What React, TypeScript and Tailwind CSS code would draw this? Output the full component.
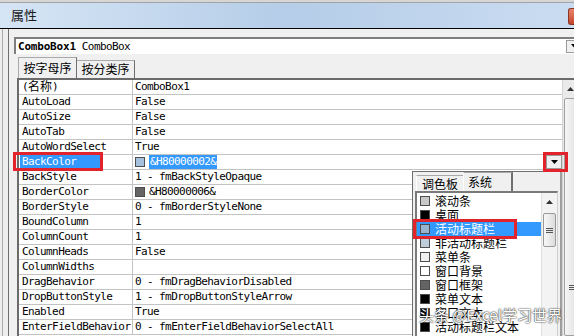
import React from 'react';

type Row = { name: string; value: string; swatch?: string; selected?: boolean };

const rows: Row[] = [
  { name: '(名称)', value: 'ComboBox1' },
  { name: 'AutoLoad', value: 'False' },
  { name: 'AutoSize', value: 'False' },
  { name: 'AutoTab', value: 'False' },
  { name: 'AutoWordSelect', value: 'True' },
  { name: 'BackColor', value: '&H80000002&', swatch: '#a6c1df', selected: true },
  { name: 'BackStyle', value: '1 - fmBackStyleOpaque' },
  { name: 'BorderColor', value: '&H80000006&', swatch: '#646464' },
  { name: 'BorderStyle', value: '0 - fmBorderStyleNone' },
  { name: 'BoundColumn', value: '1' },
  { name: 'ColumnCount', value: '1' },
  { name: 'ColumnHeads', value: 'False' },
  { name: 'ColumnWidths', value: '' },
  { name: 'DragBehavior', value: '0 - fmDragBehaviorDisabled' },
  { name: 'DropButtonStyle', value: '1 - fmDropButtonStyleArrow' },
  { name: 'Enabled', value: 'True' },
  { name: 'EnterFieldBehavior', value: '0 - fmEnterFieldBehaviorSelectAll' },
];

const systemColors = [
  { label: '滚动条', color: '#c8c8c8' },
  { label: '桌面', color: '#000000' },
  { label: '活动标题栏', color: '#99b4d1', selected: true },
  { label: '非活动标题栏', color: '#bfcddb' },
  { label: '菜单条', color: '#f0f0f0' },
  { label: '窗口背景', color: '#ffffff' },
  { label: '窗口框架', color: '#646464' },
  { label: '菜单文本', color: '#000000' },
  { label: '窗口文本', color: '#000000' },
  { label: '活动标题栏文本', color: '#000000' },
];

function DownArrow() {
  return (
    <svg width="7" height="4" viewBox="0 0 7 4">
      <path d="M0 0h7L3.5 4z" fill="#000" />
    </svg>
  );
}

function UpArrow() {
  return (
    <svg width="7" height="4" viewBox="0 0 7 4">
      <path d="M0 4h7L3.5 0z" fill="#333" />
    </svg>
  );
}

function Grip() {
  return (
    <div className="flex flex-col gap-px">
      <div className="w-[7px] h-px bg-[#555]" />
      <div className="w-[7px] h-px bg-[#555]" />
      <div className="w-[7px] h-px bg-[#555]" />
    </div>
  );
}

export default function App() {
  return (
    <div className="relative w-[574px] h-[336px] overflow-hidden bg-[#f0f0f0] text-black font-['DejaVu_Sans_Mono','Noto_Sans_CJK_SC',monospace]">
      {/* sheet behind the window */}
      <div className="h-[3px] bg-[#d6d6d6] border-b border-[#a3a3a3]" />

      {/* title bar */}
      <div className="flex h-[26px] border-b border-black bg-gradient-to-r from-[#d6e5f5] via-[#b5cde8] to-[#cadcf1]">
        <span className="pl-[11px] pt-[3px] text-[13px] leading-[18px] text-[#1a1a1a] font-['Noto_Sans_CJK_SC',sans-serif]">
          属性
        </span>
        <div className="ml-auto mt-[5px] w-[6px] h-[17px] rounded-l-[3px] border border-r-0 border-[#8b3525] bg-gradient-to-b from-[#e8866d] to-[#c4432a]" />
      </div>

      <div className="flex h-[307px]">
        <div className="flex-none w-[9px] border-r border-[#707070] bg-[#eeeeee]">
          <div className="ml-[2px] w-px h-full bg-[#aaaaaa]" />
        </div>

        <div className="flex-none w-[600px] flex flex-col pt-[8px] pl-[5px]">
          {/* object combo */}
          <div className="flex items-center w-[570px] h-[17px] bg-white border-t-2 border-l-2 border-[#7e7e7e]">
            <span className="pl-[2px] text-[11px] leading-[13px] whitespace-pre">
              <b className="tracking-[-0.2px]">ComboBox1</b>
              <span className="tracking-[-0.6px]"> ComboBox</span>
            </span>
            <div className="ml-auto mr-[2px] flex items-center justify-center w-[16px] h-[13px] bg-[#f0f0f0] border border-[#9a9a9a]">
              <DownArrow />
            </div>
          </div>

          {/* tabs */}
          <div className="flex items-end mt-[3px] h-[21px] pl-[4px] font-['Noto_Sans_CJK_SC',sans-serif] text-[12px] leading-[14px]">
            <div className="flex items-center justify-center w-[59px] h-[21px] border-t border-l border-[#a9a9a9] border-r border-r-[#6f6f6f] bg-[#f0f0f0]">
              按字母序
            </div>
            <div className="flex items-center justify-center w-[58px] h-[18px] border-t border-[#a9a9a9] border-r border-r-[#6f6f6f]">
              按分类序
            </div>
          </div>

          {/* property grid */}
          <div className="flex ml-[3px] w-[565px] h-[262px] border-t-2 border-l-2 border-[#6b6b6b] bg-white">
            <div className="flex-none w-[543px] text-[11px] leading-[14px] tracking-[-0.6px] whitespace-pre">
              {rows.map((r) => (
                <div key={r.name} className="flex h-[15px] border-b border-[#c3c3c3]">
                  <div className="flex-none w-[114px] h-full pl-px border-r border-[#c3c3c3]">
                    <div
                      className={`flex items-center h-full pl-[2px] ${r.selected ? 'w-[81px] bg-[#3399ff] text-white' : ''}`}
                    >
                      {r.name === '(名称)' ? (
                        <>
                          (<span className="text-[12px] tracking-normal">名称</span>)
                        </>
                      ) : (
                        r.name
                      )}
                    </div>
                  </div>
                  <div className="flex flex-1 items-center h-full pl-[2px]">
                    {r.swatch && (
                      <div className="flex-none w-[10px] h-[10px] mr-[4px] border border-[#4d4d4d]" style={{ backgroundColor: r.swatch }} />
                    )}
                    <span className={r.selected ? 'bg-[#3399ff] text-white px-px' : ''}>{r.value}</span>
                    {r.selected && (
                      <div className="ml-auto flex items-center justify-center w-[16px] h-full bg-[#f0f0f0] border border-[#9a9a9a]">
                        <DownArrow />
                      </div>
                    )}
                  </div>
                </div>
              ))}
            </div>

            {/* grid scrollbar */}
            <div className="flex-none flex flex-col w-[20px] bg-[#eaeaea] border-l border-[#d4d4d4]">
              <div className="flex items-center justify-center w-[14px] h-[18px]">
                <UpArrow />
              </div>
              <div className="flex-1 ml-px w-[16px] pt-[186px] pl-[4px] border border-[#a0a0a0] rounded-[2px] bg-gradient-to-r from-[#f6f6f6] to-[#dedede]">
                <Grip />
              </div>
            </div>
          </div>
        </div>
      </div>

      {/* colour drop-down */}
      <div className="absolute left-[412px] top-[171px] w-[150px] h-[170px] bg-[#f0f0f0] border border-[#6d6d6d] border-r-2 border-r-[#9e9e9e]">
        <div className="flex items-end h-[19px] pl-[3px] font-['Noto_Sans_CJK_SC',sans-serif] text-[12px] leading-[14px]">
          <div className="flex items-center w-[47px] h-[16px] pl-[5px] border-t border-l border-[#a9a9a9] border-l-white">
            调色板
          </div>
          <div className="flex items-center w-[50px] h-[19px] pl-[4px] border-t border-l border-[#a9a9a9] border-l-white border-r-2 border-r-[#6f6f6f]">
            系统
          </div>
        </div>
        <div className="flex ml-[2px] w-[143px] h-[150px] bg-white border-t-2 border-l-2 border-[#7a7a7a] border-r border-r-[#cfcfcf]">
          <div className="flex-1 pt-px font-['Noto_Sans_CJK_SC',sans-serif] text-[12px] leading-[14px]">
            {systemColors.map((c) => (
              <div
                key={c.label}
                className={`flex items-center h-[14px] pl-[3px] ${c.selected ? 'bg-[#3399ff] text-white' : ''}`}
              >
                <div className="flex-none w-[10px] h-[10px] border border-[#4d4d4d]" style={{ backgroundColor: c.color }} />
                <span className="ml-[5px] whitespace-nowrap">{c.label}</span>
              </div>
            ))}
          </div>
          <div className="flex-none flex flex-col items-center w-[16px] bg-[#f3f3f3] border-l border-[#e0e0e0]">
            <div className="flex items-center justify-center h-[18px]">
              <UpArrow />
            </div>
            <div className="flex items-center justify-center mt-[2px] w-[13px] h-[34px] border border-[#9a9a9a] rounded-[2px] bg-gradient-to-r from-[#f8f8f8] to-[#dcdcdc]">
              <Grip />
            </div>
          </div>
        </div>
      </div>

      {/* watermark */}
      <div className="absolute left-[419px] top-[305px] text-[15px] leading-[20px] text-white whitespace-nowrap font-['Noto_Sans_CJK_SC',sans-serif] [text-shadow:0_0_1px_#222,0_0_2px_#222]">
        头条 @Excel学习世界
      </div>

      {/* red annotation boxes */}
      <div className="absolute left-[13px] top-[152px] w-[90px] h-[19px] border-[3px] border-[#e3232b]" />
      <div className="absolute left-[543px] top-[152px] w-[25px] h-[20px] border-[3px] border-[#e3232b]" />
      <div className="absolute left-[413px] top-[219px] w-[104px] h-[20px] border-[3px] border-[#e3232b]" />
    </div>
  );
}
